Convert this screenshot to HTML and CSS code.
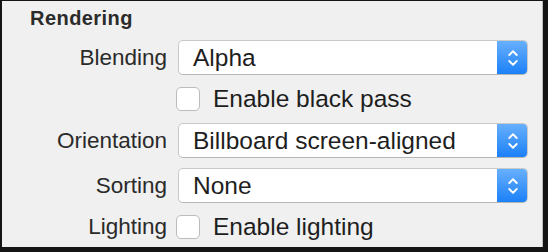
FILE: index.html
```html
<!DOCTYPE html>
<html>
<head>
<meta charset="utf-8">
<link rel="stylesheet" href="styles.css">
</head>
<body>
<div class="panel">
  <div class="heading">Rendering</div>
  <div class="form">
    <div class="label">Blending</div>
    <div class="popup"><span class="popup-text">Alpha</span><span class="stepper"><svg width="10" height="18" viewBox="0 0 10 18"><path d="M1.3 6 L5 2.2 L8.7 6 M1.3 12 L5 15.8 L8.7 12" fill="none" stroke="#fff" stroke-width="1.9" stroke-linecap="round" stroke-linejoin="round"/></svg></span></div>

    <div class="label"></div>
    <label class="check"><span class="box"></span><span class="check-text">Enable black pass</span></label>

    <div class="label">Orientation</div>
    <div class="popup"><span class="popup-text">Billboard screen-aligned</span><span class="stepper"><svg width="10" height="18" viewBox="0 0 10 18"><path d="M1.3 6 L5 2.2 L8.7 6 M1.3 12 L5 15.8 L8.7 12" fill="none" stroke="#fff" stroke-width="1.9" stroke-linecap="round" stroke-linejoin="round"/></svg></span></div>

    <div class="label">Sorting</div>
    <div class="popup"><span class="popup-text">None</span><span class="stepper"><svg width="10" height="18" viewBox="0 0 10 18"><path d="M1.3 6 L5 2.2 L8.7 6 M1.3 12 L5 15.8 L8.7 12" fill="none" stroke="#fff" stroke-width="1.9" stroke-linecap="round" stroke-linejoin="round"/></svg></span></div>

    <div class="label">Lighting</div>
    <label class="check"><span class="box"></span><span class="check-text">Enable lighting</span></label>
  </div>
</div>
</body>
</html>
```

FILE: styles.css
```css
html, body {
  margin: 0;
  padding: 0;
  background: #151515;
  width: 548px;
  height: 252px;
  overflow: hidden;
}
.panel {
  margin: 1px 0 0 2px;
  width: 540px;
  height: 246px;
  background: #f0f0f0;
  border-right: 1px solid #bcbcbc;
  font-family: "Liberation Sans", Arial, Helvetica, sans-serif;
  color: #262626;
  box-sizing: content-box;
}
.heading {
  font-weight: bold;
  font-size: 20px;
  letter-spacing: 0.45px;
  line-height: 23px;
  padding: 6px 0 0 28px;
  color: #2b2b2b;
}
.form {
  margin-top: 10px;
  display: grid;
  grid-template-columns: 165px 352px;
  grid-template-rows: 35px 28px 35px 35px 28px;
  column-gap: 9px;
  row-gap: 10px;
}
.label {
  font-size: 22.5px;
  text-align: right;
  display: flex;
  align-items: center;
  justify-content: flex-end;
  color: #2a2a2a;
}
.popup {
  margin-left: 2px;
  display: flex;
  align-items: center;
  background: #fff;
  border: 1px solid #c9c9c9;
  border-bottom-color: #b5b5b5;
  border-radius: 5px;
  overflow: hidden;
  box-sizing: border-box;
  height: 35px;
}
.popup-text {
  flex: 1;
  font-size: 24.5px;
  padding-left: 14px;
  color: #1e1e1e;
}
.stepper {
  width: 31px;
  align-self: stretch;
  margin: -1px -1px -1px 0;
  background: linear-gradient(#69b1fc, #1a7ff8);
  display: flex;
  align-items: center;
  justify-content: center;
}
.stepper svg {
  display: block;
}
.check {
  display: flex;
  align-items: center;
  gap: 13px;
}
.box {
  width: 24px;
  height: 24px;
  box-sizing: border-box;
  background: #fff;
  border: 1px solid #bcbcbc;
  border-radius: 5px;
}
.check-text {
  font-size: 24.5px;
  color: #1e1e1e;
}
```
